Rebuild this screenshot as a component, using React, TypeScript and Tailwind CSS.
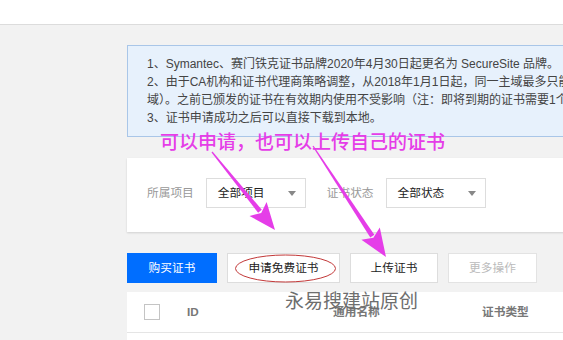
import React from 'react';

const FONT = '"Liberation Sans", "Noto Sans CJK SC", sans-serif';
const CJK = '"Noto Sans CJK SC", "Liberation Sans", sans-serif';

const notices = [
  '1、Symantec、赛门铁克证书品牌2020年4月30日起更名为 SecureSite 品牌。',
  '2、由于CA机构和证书代理商策略调整，从2018年1月1日起，同一主域最多只能申请20张免费证书（包含子',
  '域）。之前已颁发的证书在有效期内使用不受影响（注：即将到期的证书需要1个月内重新申请）。',
  '3、证书申请成功之后可以直接下载到本地。',
];

type Pt = [number, number];

// magenta annotation arrow: thin tapered shaft + filled head
function Arrow({ from, to, head, wing }: { from: Pt; to: Pt; head: number; wing: number }) {
  const dx = to[0] - from[0];
  const dy = to[1] - from[1];
  const len = Math.hypot(dx, dy);
  const ux = dx / len;
  const uy = dy / len;
  const nx = -uy;
  const ny = ux;
  const bx = to[0] - ux * head;
  const by = to[1] - uy * head;
  const p = (x: number, y: number) => `${x.toFixed(1)},${y.toFixed(1)}`;
  const shaft = [
    p(from[0] + nx * 0.6, from[1] + ny * 0.6),
    p(bx + ux * 3 + nx * 2.4, by + uy * 3 + ny * 2.4),
    p(bx + ux * 3 - nx * 2.4, by + uy * 3 - ny * 2.4),
    p(from[0] - nx * 0.6, from[1] - ny * 0.6),
  ].join(' ');
  const tip = [
    p(to[0], to[1]),
    p(bx + nx * wing, by + ny * wing),
    p(bx + ux * 5, by + uy * 5),
    p(bx - nx * wing, by - ny * wing),
  ].join(' ');
  return (
    <g fill="#e53de8">
      <polygon points={shaft} />
      <polygon points={tip} />
    </g>
  );
}

function Select({ value }: { value: string }) {
  return (
    <div className="w-[100px] h-[30px] border border-[#dddddd] bg-white flex items-center justify-between pl-[11px] pr-[9px] text-[#222]">
      <span>{value}</span>
      <svg width="8" height="5" viewBox="0 0 8 5">
        <path d="M0 0h8L4 5z" fill="#888" />
      </svg>
    </div>
  );
}

export default function App() {
  return (
    <div
      className="relative w-[563px] h-[340px] overflow-hidden bg-[#f2f2f2] text-[11.7px]"
      style={{ fontFamily: FONT }}
    >
      <div className="h-[25px] bg-white border-b border-[#dcdcdc]" />

      <div className="pl-[127px] pt-[20px]">
        <div className="w-[820px] flex flex-col">
          {/* notice */}
          <div className="border border-[#a9c6e8] bg-[#e7f1fc] pl-[19px] py-[9px] text-[12px] leading-[18px] text-[#444] whitespace-nowrap">
            {notices.map((n) => (
              <div key={n}>{n}</div>
            ))}
          </div>

          {/* filters */}
          <div className="mt-[21px] bg-white shadow-[0_1px_2px_rgba(0,0,0,0.14)] pl-[20px] pt-[20px] pb-[24px] flex items-center">
            <span className="text-[#999] mr-[12px]">所属项目</span>
            <Select value="全部项目" />
            <span className="text-[#999] ml-[21px] mr-[12px]">证书状态</span>
            <Select value="全部状态" />
          </div>

          {/* actions */}
          <div className="mt-[21px] flex gap-[10px] h-[30px]">
            <button className="w-[90px] bg-[#006eff] text-white">购买证书</button>
            <button className="w-[113px] bg-white border border-[#dddddd] text-[#222]">申请免费证书</button>
            <button className="w-[88px] bg-white border border-[#dddddd] text-[#222]">上传证书</button>
            <button className="w-[89px] bg-white border border-[#e3e3e3] text-[#bbb]">更多操作</button>
          </div>

          {/* table */}
          <div className="mt-[9px] bg-white h-[60px]">
            <div className="h-[41px] border-b border-[#e5e5e5] flex items-center font-bold text-[#777]">
              <div className="ml-[17px] w-4 h-4 border border-[#c4c4c4]" />
              <div className="ml-[27px] w-[146px]">ID</div>
              <div className="w-[149px]">通用名称</div>
              <div>证书类型</div>
            </div>
          </div>
        </div>
      </div>

      {/* annotations drawn over the screenshot */}
      <div
        className="absolute left-[160px] top-[130px] text-[19px] leading-[22px] text-[#e53de8] font-medium whitespace-nowrap"
        style={{ fontFamily: CJK }}
      >
        可以申请，也可以上传自己的证书
      </div>
      <svg className="absolute inset-0 pointer-events-none" width="563" height="340">
        <Arrow from={[212, 152]} to={[275, 230]} head={27} wing={11} />
        <Arrow from={[313, 146]} to={[386, 257]} head={28} wing={11} />
        <ellipse cx="285.5" cy="268.5" rx="50" ry="13.5" fill="none" stroke="#c23838" strokeWidth="1" />
      </svg>
      <div
        className="absolute left-[285px] top-[289px] text-[19px] leading-[22px] text-[#6e6e6e] whitespace-nowrap"
        style={{ fontFamily: CJK }}
      >
        永易搜建站原创
      </div>
    </div>
  );
}
